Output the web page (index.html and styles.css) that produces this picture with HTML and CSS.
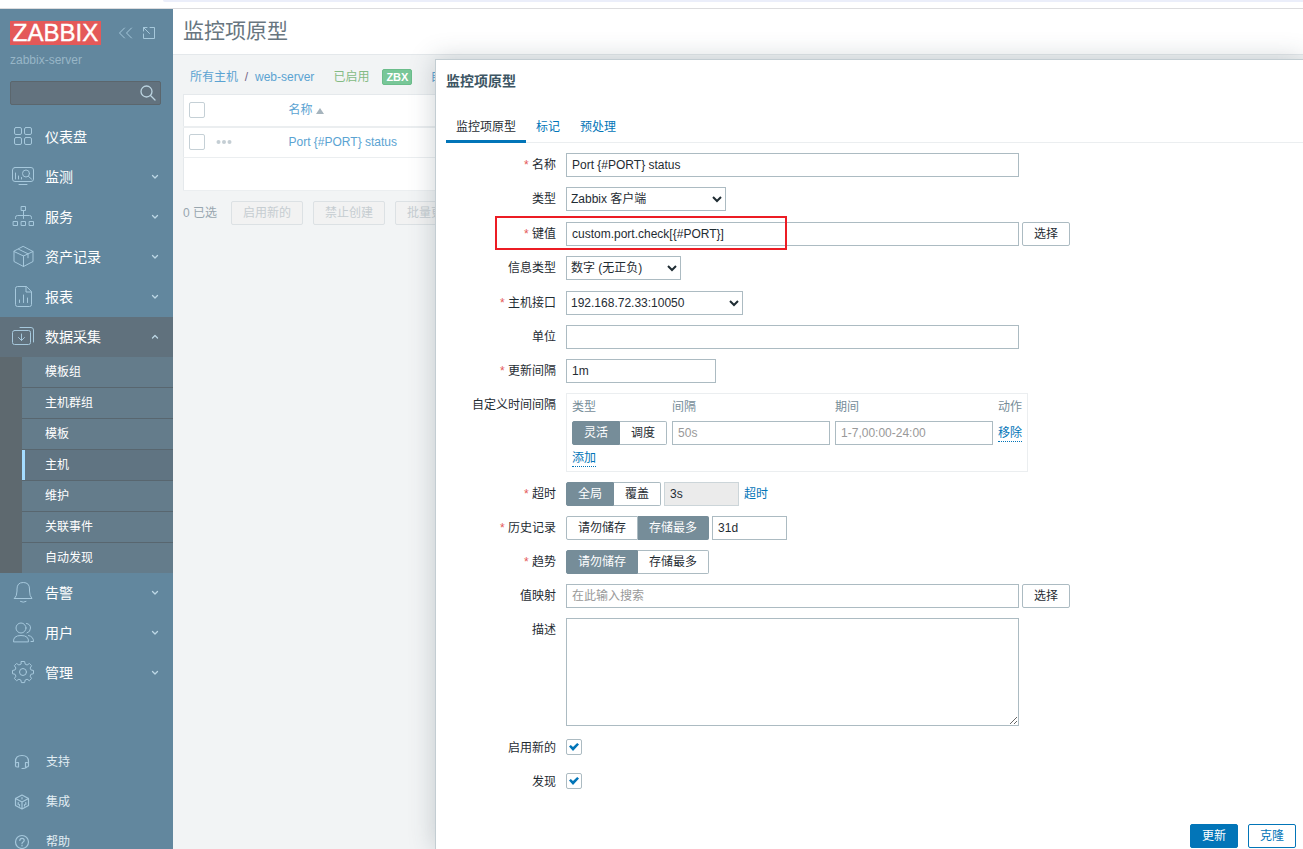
FILE: index.html
```html
<!DOCTYPE html>
<html lang="zh-CN">
<head>
<meta charset="utf-8">
<title>监控项原型</title>
<link rel="stylesheet" href="styles.css">
</head>
<body>
<div class="strip"><div class="strip-bar"></div></div>
<div class="app">
  <aside class="sidebar">
    <div class="brand">
      <a class="logo" href="#">ZABBIX</a>
      <button class="icon-button" type="button" aria-label="折叠"><svg width="16" height="16" viewBox="0 0 16 16"><path d="M7.500 3 2.500 8l5 5M14.500 3l-5 5 5 5"/></svg></button>
      <button class="icon-button" type="button" aria-label="隐藏"><svg width="16" height="16" viewBox="0 0 16 16"><path d="M9 2.500h4.500V13.500H2.500V9M2.500 6V2.500H6M2.500 2.500l6 6"/></svg></button>
    </div>
    <div class="server">zabbix-server</div>
    <form class="search">
      <input class="search-input" type="text" aria-label="搜索">
      <button class="search-button" type="button" aria-label="搜索"><svg width="18" height="18" viewBox="0 0 18 18"><circle cx="8.500" cy="7.500" r="5.500"/><path d="m12.500 11.500 4.500 4.500"/></svg></button>
    </form>
    <nav>
      <ul class="menu">
        <li><a class="menu-item" href="#"><svg class="menu-icon" viewBox="0 0 24 24"><rect x="3.500" y="2.500" width="7" height="7" rx="1.500"/><rect x="13.500" y="2.500" width="7" height="7" rx="1.500"/><rect x="3.500" y="12.500" width="7" height="7" rx="1.500"/><rect x="13.500" y="12.500" width="7" height="7" rx="1.500"/></svg><span>仪表盘</span></a></li>
        <li><a class="menu-item" href="#"><svg class="menu-icon" viewBox="0 0 24 24"><rect x="1.500" y="2.500" width="21" height="14" rx="2.500"/><path d="M8 19.500h8M4.500 8v6M7.500 11v3M10.500 12.500V14M17.500 11.500l3 2.500"/><circle cx="15" cy="8.500" r="3.500"/></svg><span>监测</span><svg class="chevron" viewBox="0 0 8 8"><path d="m1.500 2.500 2.500 2.500 2.500-2.500"/></svg></a></li>
        <li><a class="menu-item" href="#"><svg class="menu-icon" viewBox="0 0 24 24"><rect x="10.500" y="1.500" width="4" height="4"/><rect x="2.500" y="16.500" width="4" height="4"/><rect x="10.500" y="16.500" width="4" height="4"/><rect x="18.500" y="16.500" width="4" height="4"/><path d="M12.500 5.500v8M4.500 13.500v-1q0-2 2-2h12q2 0 2 2v1"/></svg><span>服务</span><svg class="chevron" viewBox="0 0 8 8"><path d="m1.500 2.500 2.500 2.500 2.500-2.500"/></svg></a></li>
        <li><a class="menu-item" href="#"><svg class="menu-icon" viewBox="0 0 24 24"><path d="m12.500 1.500 9.500 5v10l-9.500 5-9.500-5v-10zM3 6.500l9.500 4.500L22 6.500M12.500 11v10.500M7.500 4.200l9.500 4.600v4"/></svg><span>资产记录</span><svg class="chevron" viewBox="0 0 8 8"><path d="m1.500 2.500 2.500 2.500 2.500-2.500"/></svg></a></li>
        <li><a class="menu-item" href="#"><svg class="menu-icon" viewBox="0 0 24 24"><path d="M15 1.500H6.500q-2 0-2 2v16q0 2 2 2h12q2 0 2-2V7zv5.500h5.500M8.500 15v2.500M12.500 10v7.500M16.500 13v4.500"/></svg><span>报表</span><svg class="chevron" viewBox="0 0 8 8"><path d="m1.500 2.500 2.500 2.500 2.500-2.500"/></svg></a></li>
        <li>
          <a class="menu-item menu-item-open" href="#"><svg class="menu-icon" viewBox="0 0 24 24"><rect x="1.500" y="5.500" width="18" height="14" rx="2"/><path d="M9 2.500h11q2.500 0 2.500 2.500v12M10.500 9v6.500M7.500 12.500l3 3 3-3"/></svg><span>数据采集</span><svg class="chevron" viewBox="0 0 8 8"><path d="m1.500 5 2.500-2.500 2.500 2.500"/></svg></a>
          <ul class="submenu">
            <li><a class="submenu-item" href="#">模板组</a></li>
            <li><a class="submenu-item" href="#">主机群组</a></li>
            <li><a class="submenu-item" href="#">模板</a></li>
            <li><a class="submenu-item submenu-item-active" href="#">主机</a></li>
            <li><a class="submenu-item" href="#">维护</a></li>
            <li><a class="submenu-item" href="#">关联事件</a></li>
            <li><a class="submenu-item" href="#">自动发现</a></li>
          </ul>
        </li>
        <li><a class="menu-item" href="#"><svg class="menu-icon" viewBox="0 0 24 24"><path d="M3.500 17.500h17.500q-2.500-2.500-2.500-7.500V8q0-6.500-6.250-6.500T6 8v2q0 5-2.500 7.500zM9.500 20.500q2.750 1.500 5.500 0"/></svg><span>告警</span><svg class="chevron" viewBox="0 0 8 8"><path d="m1.500 2.500 2.500 2.500 2.500-2.500"/></svg></a></li>
        <li><a class="menu-item" href="#"><svg class="menu-icon" viewBox="0 0 24 24"><circle cx="10" cy="7" r="5"/><path d="M2.500 20.500q-.5-6 7.500-6t7.500 6zM15.500 2.500q4 .5 4 4.500t-3.500 5M17.500 14.500q5 1 5 6h-2.500"/></svg><span>用户</span><svg class="chevron" viewBox="0 0 8 8"><path d="m1.500 2.500 2.500 2.500 2.500-2.500"/></svg></a></li>
        <li><a class="menu-item" href="#"><svg class="menu-icon" viewBox="0 0 24 24"><circle cx="12" cy="11" r="3.500"/><path d="M10.400 .5h3.200l.6 2.700 1.900.8 2.300-1.500 2.200 2.200-1.500 2.300.8 1.900 2.600.6v3.200l-2.600.6-.8 1.900 1.500 2.300-2.200 2.200-2.300-1.500-1.900.8-.6 2.600h-3.200l-.6-2.600-1.900-.8-2.300 1.500-2.200-2.200 1.500-2.300-.8-1.900-2.600-.6v-3.200l2.600-.6.8-1.900-1.500-2.300 2.200-2.200L7.900 4l1.900-.8z"/></svg><span>管理</span><svg class="chevron" viewBox="0 0 8 8"><path d="m1.500 2.500 2.500 2.500 2.500-2.500"/></svg></a></li>
      </ul>
      <ul class="menu-footer">
        <li><a class="footer-item" href="#"><svg class="footer-icon" viewBox="0 0 16 16"><path d="M1.500 9V7.500q0-6 6.500-6t6.500 6V9M3 8.500h1.500v4.500H3q-1.500 0-1.500-1.500V10q0-1.500 1.500-1.500zM13 8.500h-1.500v4.500H13q1.500 0 1.500-1.500V10q0-1.500-1.500-1.500zM13 13q-1 1.500-5 1.500"/></svg><span>支持</span></a></li>
        <li><a class="footer-item" href="#"><svg class="footer-icon" viewBox="0 0 16 16"><path d="m8 1 6.500 3.500v7L8 15l-6.500-3.500v-7zM1.500 4.500 8 8l6.500-3.500M8 8v7M8 3.500v1.500M4.200 8.500v2M11.800 8.500v2M5.500 10.500v1.500M10.500 10.500v1.500"/></svg><span>集成</span></a></li>
        <li><a class="footer-item" href="#"><svg class="footer-icon" viewBox="0 0 16 16"><circle cx="8" cy="8" r="6.500"/><path d="M5.800 6.500q0-2.200 2.200-2.200t2.200 2q0 1-1.100 1.700T8 9.500M8 11v1"/></svg><span>帮助</span></a></li>
      </ul>
    </nav>
  </aside>

  <main class="main">
    <header class="page-header"><h1 class="page-title">监控项原型</h1></header>
    <div class="page-body">
      <div class="crumbs">
        <a href="#">所有主机</a><span class="crumb-slash">/</span><a href="#">web-server</a>
        <span class="enabled">已启用</span><span class="badge">ZBX</span><a href="#">自</a>
      </div>
      <table class="list">
        <thead><tr>
          <th class="col-check"><input class="checkbox" type="checkbox" aria-label="全选"></th>
          <th class="col-more"></th>
          <th><a href="#">名称 <span class="sort"></span></a></th>
        </tr></thead>
        <tbody>
          <tr>
            <td class="col-check"><input class="checkbox" type="checkbox" aria-label="选择 Port {#PORT} status"></td>
            <td class="col-more"><button class="more" type="button" aria-label="更多"><svg width="16" height="6" viewBox="0 0 16 6"><circle cx="2.500" cy="3" r="2"/><circle cx="8" cy="3" r="2"/><circle cx="13.500" cy="3" r="2"/></svg></button></td>
            <td><a href="#">Port {#PORT} status</a></td>
          </tr>
          <tr><td class="list-foot" colspan="3"></td></tr>
        </tbody>
      </table>
      <div class="bulk">
        <span class="bulk-count">0 已选</span>
        <button class="button" type="button" disabled>启用新的</button>
        <button class="button" type="button" disabled>禁止创建</button>
        <button class="button" type="button" disabled>批量更新</button>
      </div>
    </div>
  </main>
</div>

<section class="dialog" role="dialog" aria-labelledby="dialog-title">
  <h2 class="dialog-title" id="dialog-title">监控项原型</h2>
  <div class="tabs">
    <a class="tab tab-active" href="#">监控项原型</a>
    <a class="tab" href="#">标记</a>
    <a class="tab" href="#">预处理</a>
  </div>
  <form>
    <div class="fields">
      <label class="label required" for="name">名称</label>
      <div class="field"><input class="input wide" id="name" type="text" value="Port {#PORT} status"></div>

      <label class="label" for="type">类型</label>
      <div class="field field-select"><select class="select select-type" id="type"><option>Zabbix 客户端</option></select></div>

      <label class="label required" for="key">键值</label>
      <div class="field field-key"><input class="input wide" id="key" type="text" value="custom.port.check[{#PORT}]"><button class="button" type="button">选择</button><span class="marker"></span></div>

      <label class="label" for="value-type">信息类型</label>
      <div class="field field-select"><select class="select select-value" id="value-type"><option>数字 (无正负)</option></select></div>

      <label class="label required" for="interface">主机接口</label>
      <div class="field"><select class="select select-interface" id="interface"><option>192.168.72.33:10050</option></select></div>

      <label class="label" for="units">单位</label>
      <div class="field"><input class="input wide" id="units" type="text"></div>

      <label class="label required" for="delay">更新间隔</label>
      <div class="field"><input class="input medium" id="delay" type="text" value="1m"></div>

      <span class="label">自定义时间间隔</span>
      <div class="field">
        <div class="intervals">
          <table class="interval-table">
            <thead><tr><th>类型</th><th>间隔</th><th>期间</th><th>动作</th></tr></thead>
            <tbody>
              <tr>
                <td><div class="segments"><label class="segment"><input type="radio" name="interval" checked>灵活</label><label class="segment"><input type="radio" name="interval">调度</label></div></td>
                <td><input class="input period" type="text" placeholder="50s" aria-label="间隔"></td>
                <td><input class="input period" type="text" placeholder="1-7,00:00-24:00" aria-label="期间"></td>
                <td><a class="dotted" href="#">移除</a></td>
              </tr>
              <tr><td class="add-row" colspan="4"><a class="dotted" href="#">添加</a></td></tr>
            </tbody>
          </table>
        </div>
      </div>

      <label class="label required" for="timeout">超时</label>
      <div class="field">
        <div class="segments"><label class="segment"><input type="radio" name="timeout" checked>全局</label><label class="segment"><input type="radio" name="timeout">覆盖</label></div>
        <input class="input short" id="timeout" type="text" value="3s" disabled>
        <a class="link" href="#">超时</a>
      </div>

      <label class="label required" for="history">历史记录</label>
      <div class="field">
        <div class="segments"><label class="segment"><input type="radio" name="history">请勿储存</label><label class="segment"><input type="radio" name="history" checked>存储最多</label></div>
        <input class="input short" id="history" type="text" value="31d">
      </div>

      <span class="label required">趋势</span>
      <div class="field">
        <div class="segments"><label class="segment"><input type="radio" name="trends" checked>请勿储存</label><label class="segment"><input type="radio" name="trends">存储最多</label></div>
      </div>

      <label class="label" for="valuemap">值映射</label>
      <div class="field"><input class="input wide" id="valuemap" type="text" placeholder="在此输入搜索"><button class="button" type="button">选择</button></div>

      <label class="label" for="description">描述</label>
      <div class="field"><textarea class="input textarea wide" id="description"></textarea></div>

      <label class="label" for="enabled">启用新的</label>
      <div class="field field-check"><input class="checkbox" id="enabled" type="checkbox" checked></div>

      <label class="label" for="discover">发现</label>
      <div class="field field-check"><input class="checkbox" id="discover" type="checkbox" checked></div>
    </div>
    <div class="dialog-footer">
      <button class="button button-primary" type="button">更新</button>
      <button class="button button-outline" type="button">克隆</button>
    </div>
  </form>
</section>
</body>
</html>
```

FILE: styles.css
```css
* { box-sizing: border-box; }

body {
  display: flex;
  flex-direction: column;
  height: 100vh;
  margin: 0;
  overflow: hidden;
  background: #fff;
  color: #1f2c33;
  font: 12px/16px "Liberation Sans", Arial, "Noto Sans CJK SC", sans-serif;
}

a { color: inherit; text-decoration: none; }
ul { margin: 0; padding: 0; list-style: none; }
svg { display: block; fill: none; stroke: currentColor; stroke-linecap: round; stroke-linejoin: round; }
button, input, select, textarea { margin: 0; font: inherit; color: inherit; }

.strip { flex: none; height: 9px; padding-left: 163px; border-bottom: 1px solid #dcdcde; }
.strip-bar { height: 2px; background: #ebeefa; border-bottom-left-radius: 4px; }

.app { display: flex; flex: 1; min-height: 0; }

/* Sidebar */
.sidebar { flex: none; width: 173px; overflow: hidden; padding-top: 12px; background: #62879e; color: #fff; }
.brand { display: flex; align-items: center; height: 24px; padding-left: 10px; }
.logo { width: 91px; margin-right: 16px; background: #e45959; font-size: 24px; line-height: 24px; text-align: center; -webkit-text-stroke: 0.4px #fff; }
.icon-button { width: 16px; margin-right: 8px; padding: 0; border: 0; background: none; color: #a6c8db; }
.server { margin: 7px 10px 13px; color: #98b6c7; }
.search { display: flex; height: 24px; margin: 0 12px 12px 10px; border: 1px solid #5b666d; border-radius: 2px; background: #62727e; }
.search-input { flex: 1; min-width: 0; padding: 0 5px; border: 0; background: none; }
.search-button { width: 22px; padding: 0; border: 0; background: none; color: #bcd4e0; }
.search-button svg { stroke-width: 1.3; }

.menu-item { display: flex; align-items: center; gap: 10px; height: 40px; padding: 0 14px 0 11px; font-size: 14px; }
.menu-item-open { background: #60717d; }
.menu-icon { flex: none; width: 24px; height: 24px; color: #a6c8dc; }
.chevron { width: 8px; height: 8px; margin-left: auto; color: #bdd7e5; stroke-width: 1.3; }
.submenu { padding-left: 22px; background: #5e696f; }
.submenu li + li { border-top: 1px solid #58666f; }
.submenu-item { display: block; padding: 7px 0 7px 23px; background: #647c8b; }
.submenu-item-active { padding-left: 20px; border-left: 3px solid #a5dcff; background: #607482; }
.menu-footer { margin-top: 49px; }
.footer-item { display: flex; align-items: center; gap: 16px; height: 40px; padding-left: 14px; color: #e1edf3; }
.footer-icon { flex: none; width: 16px; height: 16px; color: #a6c8dc; stroke-width: 1.2; }

/* Page behind the dialog */
.main { flex: 1; min-width: 0; background: #f2f4f5; color: #98a6af; }
.main a { color: #5ba3d2; }
.page-header { height: 46px; padding: 8px 10px; border-bottom: 1px solid #e4e8eb; background: #fff; }
.page-title { margin: 0; color: #687680; font-size: 21px; line-height: 28px; font-weight: 400; }
.page-body { padding: 0 0 0 10px; }
.crumbs { display: flex; align-items: center; height: 39px; padding: 5px 0 0 7px; white-space: nowrap; }
.crumb-slash { width: 17px; text-align: center; color: #768; }
.enabled { margin-left: 19px; color: #84bb84; }
.badge { margin: 0 18px 0 13px; padding: 0 3px; border: 1px solid #6bbd8b; border-radius: 2px; background: #78c798; color: #fff; font-size: 11px; line-height: 14px; font-weight: 700; }
.list { width: 100%; border: 1px solid #e5e9ec; border-collapse: collapse; background: #fff; }
.list th, .list td { height: 31px; padding: 0 5px; border-bottom: 1px solid #ebeef0; font-weight: 400; text-align: left; }
.list th { height: 32px; border-bottom-width: 2px; }
.list .col-check { width: 28px; }
.list .col-more { width: 72px; padding: 0 4px; }
.list .list-foot { height: 33px; }
.list .checkbox { border-color: #c5d0d6; }
.more { display: block; padding: 0; border: 0; background: none; color: #c4ced4; }
.more svg { fill: currentColor; stroke: none; }
.sort { display: inline-block; border: 4px solid transparent; border-top: 0; border-bottom: 6px solid #a6b4bd; }
.bulk { display: flex; align-items: center; gap: 10px; padding-top: 10px; white-space: nowrap; }
.bulk-count { margin-right: 4px; }

/* Controls */
.button { flex: none; height: 24px; padding: 0 11px; border: 1px solid #acbbc2; border-radius: 2px; background: #fff; line-height: 22px; }
.button:disabled { border-color: #dce1e4; background: #f2f2f2; color: #c6cdd1; }
.button-primary { border-color: #0275b8; background: #0275b8; color: #fff; }
.button-outline { border-color: #0275b8; color: #0275b8; }
.checkbox { display: block; flex: none; width: 16px; height: 16px; appearance: none; border: 1px solid #acbbc2; border-radius: 2px; background: #fff; }
.checkbox:checked::before { content: ""; display: block; width: 10px; height: 8px; margin: 3px 2px; background: #0275b8; clip-path: polygon(0 45%, 18% 25%, 40% 50%, 82% 0, 100% 20%, 40% 100%); }
.input { display: block; min-width: 0; height: 24px; padding: 0 5px; border: 1px solid #acbbc2; border-radius: 0; background: #fff; }
.input::placeholder { color: #999; }
.input:disabled { border-color: #ccd5d9; background: #ebebeb; color: #1f2c33; }
.select { height: 24px; padding: 0; border: 1px solid #acbbc2; border-radius: 0; background: #fff; }
.wide { width: 453px; }
.medium { width: 150px; }
.short { width: 75px; }
.period { width: 158px; }
.select-type { width: 160px; }
.select-value { width: 115px; }
.select-interface { width: 177px; }
.textarea { height: 108px; padding: 4px 5px; resize: vertical; }
.segments { display: flex; }
.segment { padding: 0 11px; border: 1px solid #acbbc2; border-left-width: 0; line-height: 22px; white-space: nowrap; }
.segment:first-child { border-left-width: 1px; border-radius: 2px 0 0 2px; }
.segment:last-child { border-radius: 0 2px 2px 0; }
.segment:has(:checked) { border-color: #768d99; background: #768d99; color: #fff; }
.segment input { position: absolute; width: 1px; height: 1px; margin: 0; opacity: 0; }
.link { margin-left: 2px; color: #0275b8; }
.dotted { display: inline-block; border-bottom: 1px dotted #0275b8; color: #0275b8; line-height: 16px; }

/* Dialog */
.dialog {
  position: absolute;
  inset: 59px 0 0 435px;
  overflow: hidden;
  padding: 13px 0 0 10px;
  border-top: 1px solid #c3cdd2;
  border-left: 1px solid #c3cdd2;
  background: #fff;
  box-shadow: 0 0 24px rgba(50, 70, 85, 0.25);
}
.dialog-title { margin: 0; color: #3c5563; font-size: 14px; line-height: 16px; font-weight: 700; }
.tabs { display: flex; margin: 22px 0 10px; border-bottom: 1px solid #ebeef0; }
.tab { height: 32px; margin-bottom: -1px; padding: 8px 10px 0; color: #0275b8; }
.tab-active { border-bottom: 3px solid #0275b8; color: #1f2c33; }
.fields { display: grid; grid-template-columns: 110px 1fr; gap: 10px; }
.label { line-height: 24px; text-align: right; white-space: nowrap; }
.required::before { content: "* "; color: #e45959; }
.field { display: flex; align-items: center; gap: 3px; min-height: 24px; }
.field-select { min-height: 25px; align-items: flex-start; }
.field-check { padding-bottom: 2px; }
.field-key { position: relative; }
.marker { position: absolute; top: -6px; left: -71px; width: 292px; height: 34px; border: 2px solid #ec1c24; pointer-events: none; }
.intervals { padding: 0 5px; border: 1px solid #ebeef0; }
.interval-table { border-collapse: collapse; }
.interval-table th { height: 27px; padding: 0 5px 2px 0; color: #768d99; font-weight: 400; text-align: left; }
.interval-table td { padding: 0 5px 0 0; }
.interval-table th:last-child, .interval-table td:last-child { padding-right: 0; }
.interval-table .add-row { height: 26px; }
.dialog-footer { display: flex; justify-content: flex-end; gap: 10px; padding: 30px 7px 0 0; }
```
